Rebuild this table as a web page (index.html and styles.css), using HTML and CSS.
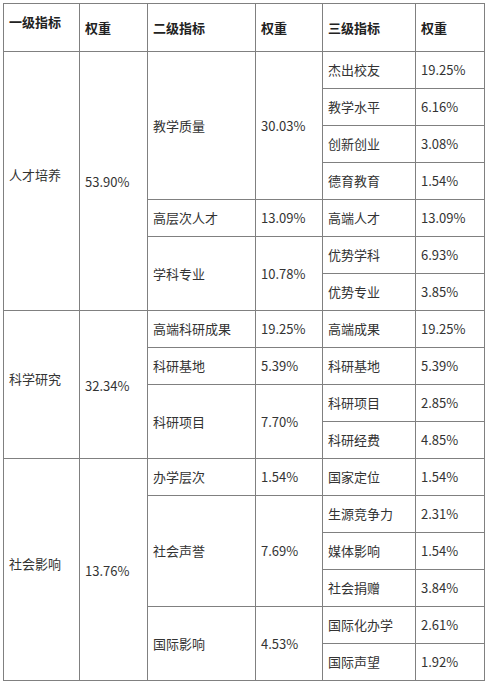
FILE: index.html
```html
<!DOCTYPE html>
<html lang="zh">
<head>
<meta charset="utf-8">
<link rel="stylesheet" href="styles.css">
</head>
<body>
<div class="wrap">
<table class="idx">
<colgroup>
<col class="c1"><col class="c2"><col class="c3"><col class="c4"><col class="c5"><col class="c6">
</colgroup>
<thead>
<tr class="head">
<th class="first">一级指标</th><th>权重</th><th>二级指标</th><th>权重</th><th>三级指标</th><th>权重</th>
</tr>
</thead>
<tbody>
<tr><td rowspan="7" class="l1">人才培养</td><td rowspan="7" class="w1">53.90%</td><td rowspan="4">教学质量</td><td rowspan="4">30.03%</td><td>杰出校友</td><td>19.25%</td></tr>
<tr><td>教学水平</td><td>6.16%</td></tr>
<tr><td>创新创业</td><td>3.08%</td></tr>
<tr><td>德育教育</td><td>1.54%</td></tr>
<tr><td>高层次人才</td><td>13.09%</td><td>高端人才</td><td>13.09%</td></tr>
<tr><td rowspan="2">学科专业</td><td rowspan="2">10.78%</td><td>优势学科</td><td>6.93%</td></tr>
<tr><td>优势专业</td><td>3.85%</td></tr>
<tr><td rowspan="4" class="l1">科学研究</td><td rowspan="4" class="w1">32.34%</td><td>高端科研成果</td><td>19.25%</td><td>高端成果</td><td>19.25%</td></tr>
<tr><td>科研基地</td><td>5.39%</td><td>科研基地</td><td>5.39%</td></tr>
<tr><td rowspan="2">科研项目</td><td rowspan="2">7.70%</td><td>科研项目</td><td>2.85%</td></tr>
<tr><td>科研经费</td><td>4.85%</td></tr>
<tr><td rowspan="6" class="l1">社会影响</td><td rowspan="6" class="w1">13.76%</td><td>办学层次</td><td>1.54%</td><td>国家定位</td><td>1.54%</td></tr>
<tr><td rowspan="3">社会声誉</td><td rowspan="3">7.69%</td><td>生源竞争力</td><td>2.31%</td></tr>
<tr><td>媒体影响</td><td>1.54%</td></tr>
<tr><td>社会捐赠</td><td>3.84%</td></tr>
<tr><td rowspan="2">国际影响</td><td rowspan="2">4.53%</td><td>国际化办学</td><td>2.61%</td></tr>
<tr><td>国际声望</td><td>1.92%</td></tr>
</tbody>
</table>
</div>
</body>
</html>
```
FILE: styles.css
```css
html, body {
  margin: 0;
  padding: 0;
  background: #fff;
}
.wrap {
  padding: 3px 0 0 3px;
}
.idx {
  border-collapse: collapse;
  table-layout: fixed;
  width: 481px;
  border: 1px solid #1a1a1a;
  font-family: "Noto Sans CJK SC", "Microsoft YaHei", sans-serif;
  font-size: 13px;
  color: #333;
}
.c1 { width: 76px; }
.c2 { width: 68px; }
.c3 { width: 108px; }
.c4 { width: 67px; }
.c5 { width: 93px; }
.c6 { width: 69px; }
.idx th, .idx td {
  border: 1px solid #808080;
  padding: 0 4px 0 5px;
  text-align: left;
  vertical-align: middle;
  line-height: 18px;
  white-space: nowrap;
}
.idx th {
  font-weight: bold;
  color: #222;
}
.head { height: 48px; }
.head th.first {
  vertical-align: top;
  padding-top: 9px;
}
.idx tbody tr { height: 37px; }
.idx td.l1 { padding-bottom: 12px; }
.idx td.w1 { padding-top: 2px; }
```
